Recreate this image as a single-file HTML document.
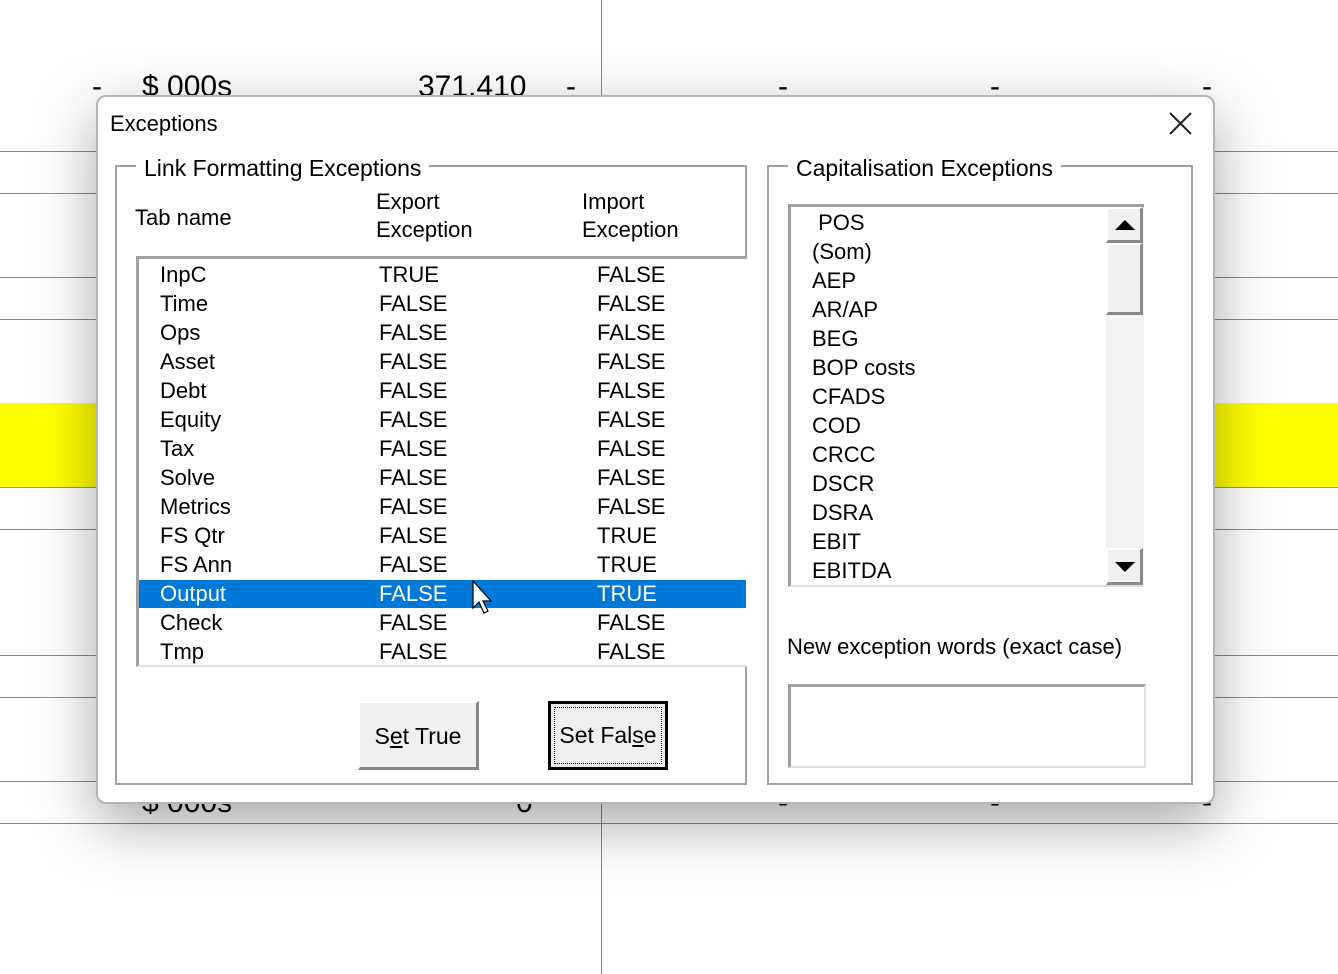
<!DOCTYPE html>
<html><head><meta charset="utf-8"><style>
*{margin:0;padding:0;box-sizing:border-box}
body{width:1338px;height:974px;position:relative;overflow:hidden;background:#fff;font-family:"Liberation Sans",sans-serif;color:#000}
.hl{position:absolute;left:0;width:1338px;height:1px;background:#8a8a8a}
.a{position:absolute;white-space:nowrap}
.t{font-size:22px;line-height:29px}
#dlg{position:absolute;left:96px;top:95px;width:1119px;height:709px;background:#fff;border:2px solid #b4b4b4;border-radius:10px;box-shadow:0 20px 60px rgba(0,0,0,.35)}
.frame{position:absolute;border:2px solid #a0a0a0}
.leg{position:absolute;background:#fff;padding:0 8px;font-size:23px;line-height:26px}
.btn{position:absolute;background:#efefef;border-top:2px solid #fff;border-left:2px solid #fff;border-right:3px solid #888;border-bottom:3px solid #888;font-size:23px;text-align:center}
</style></head><body>
<div class="hl" style="top:151px"></div><div class="hl" style="top:193px"></div>
<div class="hl" style="top:277px"></div><div class="hl" style="top:319px"></div>
<div style="position:absolute;left:0;top:403px;width:1338px;height:85px;background:#ffff00;border-bottom:1px solid #8a8a8a"></div>
<div class="hl" style="top:529px"></div>
<div class="hl" style="top:655px"></div><div class="hl" style="top:697px"></div>
<div class="hl" style="top:781px"></div><div class="hl" style="top:823px"></div>
<div style="position:absolute;left:601px;top:0;width:1px;height:974px;background:#8a8a8a"></div>
<div class="a" style="left:92px;top:70px;font-size:30px">-</div>
<div class="a" style="left:142px;top:70px;font-size:30px">$ 000s</div>
<div class="a" style="left:418px;top:70px;font-size:30px">371,410</div>
<div class="a" style="left:566px;top:70px;font-size:30px">-</div>
<div class="a" style="left:778px;top:70px;font-size:30px">-</div>
<div class="a" style="left:990px;top:70px;font-size:30px">-</div>
<div class="a" style="left:1202px;top:70px;font-size:30px">-</div>
<div class="a" style="left:142px;top:786px;font-size:30px">$ 000s</div>
<div class="a" style="left:516px;top:786px;font-size:30px">0</div>
<div class="a" style="left:778px;top:786px;font-size:30px">-</div>
<div class="a" style="left:990px;top:786px;font-size:30px">-</div>
<div class="a" style="left:1202px;top:786px;font-size:30px">-</div>

<div id="dlg"></div>
<div class="a" style="left:110px;top:111px;font-size:22px">Exceptions</div>
<svg class="a" style="left:1169px;top:112px" width="23" height="23"><path d="M1 1L22 22M22 1L1 22" stroke="#222" stroke-width="2"/></svg>

<div class="frame" style="left:115px;top:165px;width:632px;height:620px"></div>
<div class="leg" style="left:136px;top:155px">Link Formatting Exceptions</div>
<div class="a t" style="left:135px;top:203px">Tab name</div>
<div class="a t" style="left:376px;top:188px;line-height:28px">Export<br>Exception</div>
<div class="a t" style="left:582px;top:188px;line-height:28px">Import<br>Exception</div>
<div style="position:absolute;left:136px;top:256px;width:611px;height:411px;background:#fff;border-top:3px solid #a0a0a0;border-left:3px solid #a0a0a0;border-bottom:2px solid #e0e0e0"></div>
<div style="position:absolute;left:139px;top:580px;width:607px;height:28px;background:#0078d7"></div>
<div class="a t" style="left:160px;top:260px">InpC<br>Time<br>Ops<br>Asset<br>Debt<br>Equity<br>Tax<br>Solve<br>Metrics<br>FS Qtr<br>FS Ann<br><span style="color:#fff">Output</span><br>Check<br>Tmp</div>
<div class="a t" style="left:379px;top:260px">TRUE<br>FALSE<br>FALSE<br>FALSE<br>FALSE<br>FALSE<br>FALSE<br>FALSE<br>FALSE<br>FALSE<br>FALSE<br><span style="color:#fff">FALSE</span><br>FALSE<br>FALSE</div>
<div class="a t" style="left:597px;top:260px">FALSE<br>FALSE<br>FALSE<br>FALSE<br>FALSE<br>FALSE<br>FALSE<br>FALSE<br>FALSE<br>TRUE<br>TRUE<br><span style="color:#fff">TRUE</span><br>FALSE<br>FALSE</div>
<svg class="a" style="left:472px;top:580px" width="26" height="40"><path d="M1 1L1 28L7 22L12 33L16 31L11 21L19 21Z" fill="#fff" stroke="#000" stroke-width="1.2"/></svg>

<div class="btn" style="left:358px;top:701px;width:121px;height:69px;line-height:66px">S<u>e</u>t True</div>
<div class="btn" style="left:548px;top:701px;width:120px;height:69px;border:3px solid #000;line-height:62px"><div style="position:absolute;inset:3px;border:1px dotted #000"></div>Set Fal<u>s</u>e</div>

<div class="frame" style="left:767px;top:165px;width:426px;height:620px"></div>
<div class="leg" style="left:788px;top:155px">Capitalisation Exceptions</div>
<div style="position:absolute;left:788px;top:204px;width:356px;height:383px;background:#fff;border-top:3px solid #a0a0a0;border-left:3px solid #a0a0a0;border-bottom:2px solid #e0e0e0"></div>
<div class="a t" style="left:812px;top:208px">&nbsp;POS<br>(Som)<br>AEP<br>AR/AP<br>BEG<br>BOP costs<br>CFADS<br>COD<br>CRCC<br>DSCR<br>DSRA<br>EBIT<br>EBITDA</div>
<div style="position:absolute;left:1106px;top:207px;width:38px;height:378px;background:#f4f4f4"></div>
<div class="btn" style="left:1106px;top:207px;width:37px;height:36px"></div>
<svg class="a" style="left:1114px;top:219px" width="22" height="12"><path d="M1 11L11 1L21 11Z"/></svg>
<div class="btn" style="left:1106px;top:243px;width:37px;height:72px"></div>
<div class="btn" style="left:1106px;top:548px;width:37px;height:37px"></div>
<svg class="a" style="left:1114px;top:561px" width="22" height="12"><path d="M1 1L11 11L21 1Z"/></svg>
<div class="a t" style="left:787px;top:632px">New exception words (exact case)</div>
<div style="position:absolute;left:788px;top:684px;width:358px;height:84px;background:#fff;border-top:3px solid #a0a0a0;border-left:3px solid #a0a0a0;border-right:2px solid #e0e0e0;border-bottom:2px solid #e0e0e0"></div>
</body></html>
